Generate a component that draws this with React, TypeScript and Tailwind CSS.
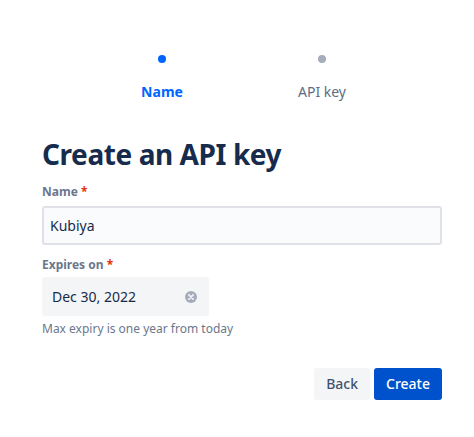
import { useState } from 'react';

const ClearIcon = () => (
  <svg width="16" height="16" viewBox="0 0 24 24" xmlns="http://www.w3.org/2000/svg">
    <circle cx="12" cy="12" r="9" fill="#A5ADBA" />
    <path d="M8.8 8.8l6.4 6.4M15.2 8.8l-6.4 6.4" stroke="#F4F5F7" strokeWidth="2.4" strokeLinecap="round" />
  </svg>
);

export default function App() {
  const [name, setName] = useState('Kubiya');

  return (
    <div className="w-[474px] h-[437px] bg-white pl-[42px] pr-[32px] pt-[55px] text-[#172B4D]" style={{ fontFamily: '"Noto Sans", "Open Sans", sans-serif' }}>
      {/* Progress tracker */}
      <div className="flex justify-center">
        <div className="flex flex-col items-center w-[160px]">
          <span className="w-2 h-2 rounded-full bg-[#0065FF]" />
          <span className="mt-[19px] text-sm font-bold text-[#0065FF] leading-5">Name</span>
        </div>
        <div className="flex flex-col items-center w-[160px]">
          <span className="w-2 h-2 rounded-full bg-[#A5ADBA]" />
          <span className="mt-[19px] text-sm text-[#5E6C84] leading-5">API key</span>
        </div>
      </div>

      <h1 className="mt-[36px] text-[28px] font-bold leading-8 tracking-[-0.015em]">Create an API key</h1>

      <label className="block mt-[14px] text-xs font-bold text-[#6B778C] leading-4">
        Name <span className="text-[#DE350B]">*</span>
      </label>
      <input
        value={name}
        onChange={(e) => setName(e.target.value)}
        className="mt-[6px] w-full h-[39px] px-[6px] bg-[#FAFBFC] border-2 border-[#DFE1E6] rounded-[3px] text-sm text-[#172B4D] outline-none"
      />

      <label className="block mt-[12px] text-xs font-bold text-[#6B778C] leading-4">
        Expires on <span className="text-[#DE350B]">*</span>
      </label>
      <div className="mt-[4px] w-[167px] h-[39px] bg-[#F4F5F7] rounded-[3px] flex items-center justify-between pl-[10px] pr-[10px]">
        <span className="text-sm text-[#172B4D]">Dec 30, 2022</span>
        <ClearIcon />
      </div>
      <p className="mt-[5px] text-xs text-[#6B778C] leading-4">Max expiry is one year from today</p>

      <div className="mt-[31px] flex justify-end gap-1">
        <button className="h-8 px-[12px] rounded-[3px] bg-[#F4F5F7] text-sm font-medium text-[#42526E]">Back</button>
        <button className="h-8 px-[12px] rounded-[3px] bg-[#0052CC] text-sm font-medium text-white">Create</button>
      </div>
    </div>
  );
}
